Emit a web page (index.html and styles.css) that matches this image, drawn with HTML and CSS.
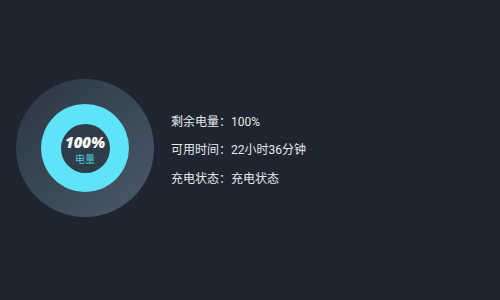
FILE: index.html
```html
<!DOCTYPE html>
<html lang="zh-CN">
<head>
    <meta charset="UTF-8">
    <meta name="viewport" content="width=device-width, initial-scale=1.0">
    <title>电池信息</title>
    <link rel="stylesheet" href="styles.css">
</head>
<body>
    <div class="screen">
        <div class="battery-ring">
            <div class="ring-fill">
                <div class="ring-core">
                    <div class="core-value">100%</div>
                    <div class="core-label">电量</div>
                </div>
            </div>
        </div>

        <div class="info-list">
            <div class="info-row">剩余电量：100%</div>
            <div class="info-row">可用时间：22小时36分钟</div>
            <div class="info-row">充电状态：充电状态</div>
        </div>
    </div>
</body>
</html>
```

FILE: styles.css
```css
* {
    margin: 0;
    padding: 0;
    box-sizing: border-box;
}

:root {
    --background: #1e2430;
    --ring-outer-start: #2a3542;
    --ring-outer-end: #4a5b69;
    --cyan: #5ee3f8;
    --cyan-text: #52c9de;
    --core: #2f3c49;
    --text-primary: #e6e8ea;
}

body {
    background-color: var(--background);
    color: var(--text-primary);
    font-family: Roboto, "Noto Sans CJK SC", sans-serif;
    width: 500px;
    height: 300px;
    overflow: hidden;
}

.screen {
    height: 300px;
    display: flex;
    align-items: center;
    padding-left: 16px;
}

.battery-ring {
    width: 138px;
    height: 138px;
    margin-top: -4px;
    border-radius: 50%;
    background: linear-gradient(135deg, var(--ring-outer-start), var(--ring-outer-end));
    display: flex;
    align-items: center;
    justify-content: center;
}

.ring-fill {
    width: 88px;
    height: 88px;
    border-radius: 50%;
    background: var(--cyan);
    display: flex;
    align-items: center;
    justify-content: center;
}

.ring-core {
    width: 49px;
    height: 49px;
    border-radius: 50%;
    background: var(--core);
    display: flex;
    flex-direction: column;
    align-items: center;
    justify-content: center;
}

.core-value {
    font-family: "Open Sans", sans-serif;
    font-size: 15px;
    font-weight: 800;
    font-style: italic;
    color: #ffffff;
    line-height: 16px;
    margin-top: 4px;
}

.core-label {
    font-size: 10px;
    color: var(--cyan-text);
    line-height: 12px;
    margin-top: 4px;
}

.info-list {
    margin-left: 17px;
    display: flex;
    flex-direction: column;
    gap: 10.5px;
}

.info-row {
    font-size: 12px;
    line-height: 18px;
}
```
